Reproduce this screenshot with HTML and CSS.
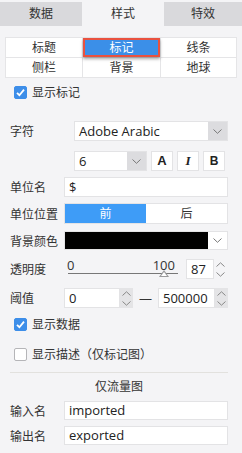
FILE: index.html
```html
<!DOCTYPE html>
<html lang="zh">
<head>
	<meta charset="UTF-8">
	<title>样式</title>
	<link rel="stylesheet" href="styles.css">
</head>
<body>
	<div id="panel">
		<ul class="tabs">
			<li class="tab-a">数据</li>
			<li class="tab-b on">样式</li>
			<li class="tab-c">特效</li>
		</ul>
		<ul class="subnav">
			<li>标题</li>
			<li class="on">标记</li>
			<li>线条</li>
			<li>侧栏</li>
			<li>背景</li>
			<li>地球</li>
		</ul>

		<label class="check check-mark"><span class="box on"><svg width="11" height="11" viewBox="0 0 11 11"><polyline points="2,5.8 4.4,8.2 9,2.6" fill="none" stroke="#fff" stroke-width="1.8"/></svg></span>显示标记</label>

		<div class="row row-font">
			<span class="label wide">字符</span>
			<div class="select grow">
				<span class="val">Adobe Arabic</span>
				<span class="arrow"><svg width="9" height="5" viewBox="0 0 9 5"><polyline points="0.5,0.5 4.5,4.3 8.5,0.5" fill="none" stroke="#777" stroke-width="1"/></svg></span>
			</div>
		</div>

		<div class="row row-size">
			<span class="label wide"></span>
			<div class="select size">
				<span class="val">6</span>
				<span class="arrow"><svg width="9" height="5" viewBox="0 0 9 5"><polyline points="0.5,0.5 4.5,4.3 8.5,0.5" fill="none" stroke="#777" stroke-width="1"/></svg></span>
			</div>
			<span class="fbtn fa">A</span>
			<span class="fbtn fi">I</span>
			<span class="fbtn fb">B</span>
		</div>

		<div class="row row-unit">
			<span class="label">单位名</span>
			<div class="field grow">$</div>
		</div>

		<div class="row row-pos">
			<span class="label">单位位置</span>
			<div class="seg grow">
				<span class="on">前</span>
				<span>后</span>
			</div>
		</div>

		<div class="row row-bg">
			<span class="label">背景颜色</span>
			<div class="color grow">
				<span class="swatch"></span>
				<span class="arrow"><svg width="9" height="5" viewBox="0 0 9 5"><polyline points="0.5,0.5 4.5,4.3 8.5,0.5" fill="none" stroke="#777" stroke-width="1"/></svg></span>
			</div>
		</div>

		<div class="row row-alpha">
			<span class="label">透明度</span>
			<div class="slider">
				<div class="scale"><span>0</span><span>100</span></div>
				<div class="track"><span class="thumb" style="left: 87%"></span></div>
			</div>
			<div class="field num">87</div>
			<span class="spin"><svg width="9" height="15" viewBox="0 0 9 15"><polyline points="0.5,4.5 4.5,0.8 8.5,4.5" fill="none" stroke="#888" stroke-width="1"/><polyline points="0.5,10.5 4.5,14.2 8.5,10.5" fill="none" stroke="#888" stroke-width="1"/></svg></span>
		</div>

		<div class="row row-limit">
			<span class="label">阈值</span>
			<div class="field low">0</div>
			<span class="spin"><svg width="9" height="15" viewBox="0 0 9 15"><polyline points="0.5,4.5 4.5,0.8 8.5,4.5" fill="none" stroke="#888" stroke-width="1"/><polyline points="0.5,10.5 4.5,14.2 8.5,10.5" fill="none" stroke="#888" stroke-width="1"/></svg></span>
			<span class="dash">—</span>
			<div class="field grow">500000</div>
			<span class="spin"><svg width="9" height="15" viewBox="0 0 9 15"><polyline points="0.5,4.5 4.5,0.8 8.5,4.5" fill="none" stroke="#888" stroke-width="1"/><polyline points="0.5,10.5 4.5,14.2 8.5,10.5" fill="none" stroke="#888" stroke-width="1"/></svg></span>
		</div>

		<label class="check check-data"><span class="box on"><svg width="11" height="11" viewBox="0 0 11 11"><polyline points="2,5.8 4.4,8.2 9,2.6" fill="none" stroke="#fff" stroke-width="1.8"/></svg></span>显示数据</label>
		<label class="check check-desc"><span class="box"></span>显示描述（仅标记图）</label>

		<div class="sep"></div>
		<p class="title">仅流量图</p>

		<div class="row row-in">
			<span class="label">输入名</span>
			<div class="field grow">imported</div>
		</div>
		<div class="row row-out">
			<span class="label">输出名</span>
			<div class="field grow">exported</div>
		</div>
	</div>
</body>
</html>
```

FILE: styles.css
```css
*{margin: 0;padding: 0;box-sizing: border-box;}
li{list-style: none;}
body{
	background: #f4f4f6;
	color: #333;
	font: 12px "Open Sans", "Noto Sans CJK SC", sans-serif;
}
#panel{
	width: 242px;
	height: 453px;
	padding-top: 2px;
}
/* 顶部标签 */
.tabs{
	display: flex;
	height: 24px;
}
.tabs li{
	background: #d9d9dc;
	text-align: center;
	line-height: 24px;
}
.tabs .tab-a{width: 82px;}
.tabs .tab-b{width: 82px;}
.tabs .tab-c{flex: 1;}
.tabs li.on{background: none;}
/* 子菜单 */
.subnav{
	display: grid;
	grid-template-columns: 76px 77px 1fr;
	gap: 1px;
	margin: 11px 5px 0;
	padding: 1px;
	background: #e5e5e7;
}
.subnav li{
	height: 19px;
	line-height: 19px;
	text-align: center;
	background: #fff;
}
.subnav li.on{
	position: relative;
	z-index: 1;
	color: #fff;
	background: #3b8fe8;
	box-shadow: inset 0 0 0 2px #e9513f, 0 2px 3px rgba(0,0,0,.35);
}
/* 复选框 */
.check{
	display: flex;
	align-items: center;
	height: 13px;
	margin-left: 14px;
	line-height: 13px;
}
.box{
	display: flex;
	align-items: center;
	justify-content: center;
	width: 13px;
	height: 13px;
	margin-right: 5px;
	border: 1px solid #b5b5b8;
	border-radius: 2px;
	background: #fff;
}
.box.on{
	border-color: #3d8ee9;
	background: #3d8ee9;
}
.check-mark{margin-top: 8px;}
.check-data{margin-top: 10px;}
.check-desc{margin-top: 17px;}
/* 行 */
.row{
	display: flex;
	align-items: center;
	margin: 0 14px 0 10px;
}
.label{
	flex: none;
	width: 54px;
}
.label.wide{width: 64px;}
.grow{flex: 1;}
.row-font{margin-top: 22px;}
.row-size{margin-top: 10px;}
.row-unit{margin-top: 6px;}
.row-pos{margin-top: 6px;}
.row-bg{margin-top: 7px;}
.row-alpha{margin-top: 8px;}
.row-limit{margin-top: 8px;}
.row-in{margin-top: 6px;}
.row-out{margin-top: 6px;}
/* 输入框 */
.field{
	height: 20px;
	padding-left: 4px;
	border: 1px solid #e3e3e5;
	background: #fff;
	font-size: 13px;
	line-height: 18px;
	color: #222;
}
.row-in .field,
.row-out .field{height: 19px;line-height: 17px;}
.select{
	display: flex;
	height: 20px;
	border: 1px solid #e3e3e5;
	background: #fff;
}
.select .val{
	flex: 1;
	padding-left: 4px;
	font-size: 13px;
	line-height: 18px;
	color: #222;
}
.arrow{
	display: flex;
	align-items: center;
	justify-content: center;
	width: 19px;
	background: #dcdcdf;
}
.select.size{width: 73px;}
.fbtn{
	width: 22px;
	height: 20px;
	margin-left: 4px;
	border: 1px solid #e3e3e5;
	background: #fff;
	text-align: center;
	line-height: 18px;
	color: #222;
}
.fa{font: 900 13px/18px "Liberation Sans", sans-serif;}
.fi{font: italic bold 13px/18px "Liberation Serif", serif;}
.fb{font: bold 12px/18px "Liberation Sans", sans-serif;}
/* 前后切换 */
.seg{
	display: flex;
	height: 21px;
	border: 1px solid #e3e3e5;
	background: #fff;
}
.seg span{
	flex: 1;
	text-align: center;
	line-height: 19px;
}
.seg .on{
	background: #3e9cf7;
	color: #fff;
}
/* 颜色 */
.color{
	display: flex;
	height: 19px;
	border: 1px solid #e3e3e5;
	background: #fff;
}
.color .swatch{
	flex: 1;
	background: #000;
}
.color .arrow{background: #fff;}
/* 滑块 */
.slider{
	width: 110px;
	margin-left: 4px;
}
.scale{
	display: flex;
	justify-content: space-between;
	padding-right: 3px;
	margin-left: -1px;
	font-size: 13px;
	line-height: 14px;
	color: #333;
}
.track{
	position: relative;
	height: 1px;
	margin: 1px 0 6px;
	background: #777;
}
.thumb{
	position: absolute;
	top: -3px;
	width: 0;
	height: 0;
	margin-left: -5px;
	border-left: 5px solid transparent;
	border-right: 5px solid transparent;
	border-bottom: 7px solid #9a9a9c;
}
.thumb:after{
	position: absolute;
	top: 2px;
	left: -3px;
	border-left: 3px solid transparent;
	border-right: 3px solid transparent;
	border-bottom: 4px solid #fff;
	content: "";
}
.num{
	width: 28px;
	margin-left: 8px;
}
.spin{
	display: flex;
	align-items: center;
	justify-content: center;
	width: 13px;
	height: 20px;
	background: #e4e4e6;
}
.row-alpha .spin{background: none;}
.low{width: 56px;}
.dash{
	width: 25px;
	text-align: center;
	font-size: 13px;
}
/* 仅流量图 */
.sep{
	margin: 11px 14px 0 10px;
	border-top: 1px solid #e2e1de;
}
.title{
	margin: 6px 14px 0 10px;
	text-align: center;
	line-height: 16px;
}
```
